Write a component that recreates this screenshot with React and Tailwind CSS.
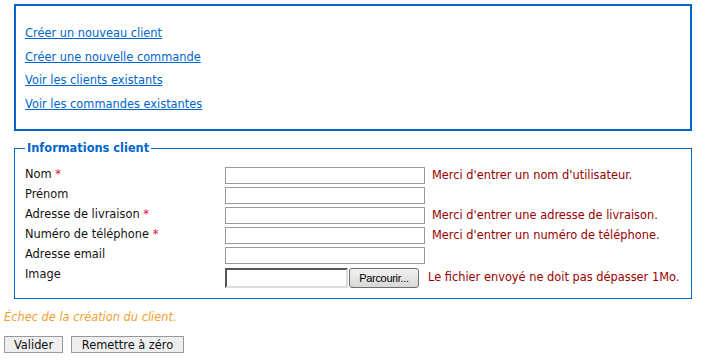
import React from 'react';

const rows = [
  { label: 'Nom', required: true, error: "Merci d'entrer un nom d'utilisateur." },
  { label: 'Prénom' },
  { label: 'Adresse de livraison', required: true, error: 'Merci d\'entrer une adresse de livraison.' },
  { label: 'Numéro de téléphone', required: true, error: 'Merci d\'entrer un numéro de téléphone.' },
  { label: 'Adresse email' },
];

const links = [
  'Créer un nouveau client',
  'Créer une nouvelle commande',
  'Voir les clients existants',
  'Voir les commandes existantes',
];

const App = () => {
  return (
    <div className="w-[701px] h-[361px] bg-white px-[4px] pt-[4px] text-[11.4px] leading-[13px] text-[#111] font-['DejaVu_Sans',Verdana,sans-serif]">
      <div className="ml-[10px] mr-[5px] h-[127px] border-2 border-[#0066cc] pl-[9px] pt-[21px]">
        <div className="flex flex-col gap-[10.5px]">
          {links.map((l) => (
            <a key={l} href="#" className="text-[#0066cc] underline w-fit">
              {l}
            </a>
          ))}
        </div>
      </div>

      <fieldset className="ml-[10px] mr-[5px] mt-[11px] border border-[#0066cc] pl-[10px] pb-[10px] pt-[12px]">
        <legend className="px-[2px] font-bold text-[#0066cc]">Informations client</legend>
        <div className="flex flex-col gap-[3px]">
          {rows.map((r) => (
            <div key={r.label} className="flex items-start h-[17px]">
              <div className="w-[200px] pt-[1px]">
                {r.label}
                {r.required && <span className="text-[#e0103a]"> *</span>}
              </div>
              <div className="w-[200px] h-[17px] border border-[#999] bg-white" />
              {r.error && <div className="ml-[7px] pt-[2px] text-[#990000]">{r.error}</div>}
            </div>
          ))}
          <div className="flex items-start mt-[1px] h-[20px]">
            <div className="w-[200px]">Image</div>
            <div className="w-[123px] h-[20px] border-2 border-t-[#555] border-l-[#555] border-b-[#ddd] border-r-[#ddd] bg-white" />
            <div className="ml-[1px] w-[70px] h-[20px] rounded-[3px] border border-[#707070] bg-gradient-to-b from-[#f2f2f2] to-[#d8d8d8] flex items-center justify-center font-['Liberation_Sans',Arial,sans-serif] text-[11px] text-black tracking-[-0.3px]">
              Parcourir...
            </div>
            <div className="ml-[9px] pt-[3px] text-[#990000]">Le fichier envoyé ne doit pas dépasser 1Mo.</div>
          </div>
        </div>
      </fieldset>

      <p className="mt-[12px] italic text-[#f0a030]">Échec de la création du client.</p>

      <div className="mt-[12px] flex gap-[8px]">
        <button className="w-[59px] h-[17px] border border-[#999] bg-[#efefef] text-[#111] leading-[14px]">Valider</button>
        <button className="w-[113px] h-[17px] border border-[#999] bg-[#efefef] text-[#111] leading-[14px]">Remettre à zéro</button>
      </div>
    </div>
  );
};

export default App;
